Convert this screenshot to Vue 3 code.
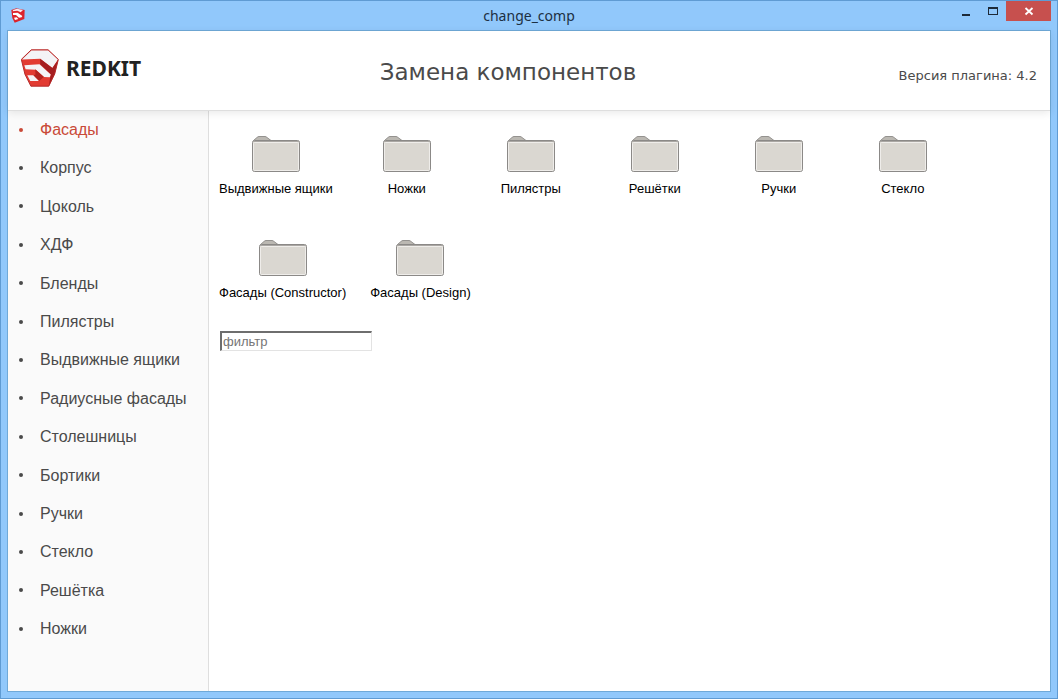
<script setup>
import { ref } from 'vue'

const categories = [
  'Фасады', 'Корпус', 'Цоколь', 'ХДФ', 'Бленды', 'Пилястры', 'Выдвижные ящики',
  'Радиусные фасады', 'Столешницы', 'Бортики', 'Ручки', 'Стекло', 'Решётка', 'Ножки',
]
const folders = [
  'Выдвижные ящики', 'Ножки', 'Пилястры', 'Решётки', 'Ручки', 'Стекло',
  'Фасады (Constructor)', 'Фасады (Design)',
]
const active = ref('Фасады')
const filter = ref('')
</script>

<template>
  <div class="window">
    <div class="titlebar">
      <svg class="app-icon" viewBox="34 22 42 45" aria-hidden="true">
        <path d="M35 28l15-5 25 5-1 27-29 11-7-14z" fill="#dc242c" />
        <path d="M40 28l12-4 18 4-7 7-10-5-14 2z" fill="#fbe9ee" />
        <path d="M40 37l14-1 14 10-2 4-8 1-9-8-9 0z" fill="#fff" />
        <path d="M43 51l8-1 5 5-10 3z" fill="#fff" />
      </svg>
      <span class="caption">change_comp</span>
      <div class="controls">
        <button class="min" type="button" aria-label="Свернуть">
          <svg viewBox="0 0 10 10"><path d="M1 8h8v2H1z" fill="#1d2a38" /></svg>
        </button>
        <button class="max" type="button" aria-label="Развернуть">
          <svg viewBox="0 0 10 10"><path d="M0 1h10v8H0zM1 3v5h8V3z" fill="#1d2a38" fill-rule="evenodd" /></svg>
        </button>
        <button class="close" type="button" aria-label="Закрыть">
          <svg viewBox="0 0 10 10"><path d="M1.500 2l7 6.500M8.500 2l-7 6.500" stroke="#fff" stroke-width="1.800" /></svg>
        </button>
      </div>
    </div>
    <div class="client">
      <header class="header">
        <div class="brand">
          <svg class="logo" viewBox="64 146 115 114" aria-hidden="true">
            <path d="M95 148h51l31 29-11 44-18 37H94l-18-36-11-45z" fill="#e23b32" />
            <path d="M96 149h50l30 28-17 26-37-28-55 2z" fill="#f4f3f6" />
            <path d="M122 175l37 28 18-26-11 44-18 37 6-35-32-31z" fill="#a51e20" />
            <path d="M74 195l46-3 34 31-3 8-17-1-25-22-31-1z" fill="#f4f3f6" />
            <path d="M107 207l26 23-14 12-18-17 7-2z" fill="#b3231f" />
            <path d="M83 225l18 0 17 17H92z" fill="#f4f3f6" />
            <path d="M95 148h51l31 29-11 44-18 37H94l-18-36-11-45z" fill="none" stroke="#b52b2b" stroke-width="3" />
          </svg>
          <span class="brand-name">REDKIT</span>
        </div>
        <h1>Замена компонентов</h1>
        <div class="version">Версия плагина: 4.2</div>
      </header>
      <div class="body">
        <nav class="sidebar">
          <ul>
            <li v-for="c in categories" :key="c" :class="{ active: c === active }">
              <a href="#" @click.prevent="active = c">{{ c }}</a>
            </li>
          </ul>
        </nav>
        <main class="content">
          <div class="folders">
            <button v-for="f in folders" :key="f" class="folder" type="button">
              <svg viewBox="0 0 48 36" aria-hidden="true">
                <path d="M1.500 9V4.500L5 1.500Q6 .5 7 .5h6q1 0 2 1l4 3V9z" fill="#bbb8b2" stroke="#94928f" />
                <rect x=".5" y="4.500" width="47" height="31" rx="2" fill="#dad7d1" stroke="#8b8987" />
                <path d="M1 5.500h46" stroke="#aaa7a3" />
                <rect x="1.500" y="6.500" width="45" height="28" rx="1" fill="none" stroke="#efedea" />
              </svg>
              <span>{{ f }}</span>
            </button>
          </div>
          <input v-model="filter" class="filter" type="text" placeholder="фильтр" aria-label="фильтр">
        </main>
      </div>
    </div>
  </div>
</template>

<style>
body { margin: 0; }
</style>

<style scoped>
* { box-sizing: border-box; }
.window {
  min-height: 100vh;
  display: flex;
  flex-direction: column;
  padding: 0 6px 6px;
  border: 1px solid #5f9bd3;
  background: #91c8fb;
  font-family: "Liberation Sans", Arial, sans-serif;
}
.titlebar {
  display: grid;
  grid-template-columns: 1fr auto 1fr;
  height: 29px;
}
.app-icon { width: 14px; height: 15px; margin: 7px 0 0 4px; }
.caption {
  font-family: "Noto Sans", "Open Sans", sans-serif;
  font-size: 14px;
  line-height: 30px;
  color: #1c2f42;
}
.controls { display: flex; justify-content: flex-end; align-items: flex-start; }
.controls button {
  width: 27px;
  height: 20px;
  padding: 0;
  border: 0;
  background: none;
  display: flex;
  align-items: center;
  justify-content: center;
}
.controls svg { width: 10px; height: 10px; }
.controls .close { width: 45px; background: #c7504e; }
.client {
  flex: 1;
  display: flex;
  flex-direction: column;
  border: 1px solid #6fa9d8;
  background: #fff;
}
.header {
  position: relative;
  display: grid;
  grid-template-columns: 1fr auto 1fr;
  align-items: center;
  height: 80px;
  padding: 0 13px;
  border-bottom: 1px solid #dedede;
  box-shadow: 0 2px 8px rgba(0, 0, 0, 0.09);
  color: #4a4a4a;
  font-family: "DejaVu Sans", Verdana, sans-serif;
}
.brand { display: flex; align-items: center; gap: 7px; padding-bottom: 5px; }
.logo { width: 38px; height: 38px; }
.brand-name { font: bold 21px/30px "Noto Sans", "Open Sans", sans-serif; color: #222; }
h1 {
  margin: 0;
  padding: 2px 42px 0 0;
  font-size: 23px;
  line-height: 30px;
  font-weight: normal;
}
.version { padding-top: 10px; text-align: right; font-size: 13px; line-height: 18px; }
.body { flex: 1; display: flex; }
.sidebar {
  width: 201px;
  flex: none;
  border-right: 1px solid #dedede;
  background: #fafafa;
}
.sidebar ul { margin: 0; padding: 0; list-style: none; font-size: 16px; line-height: 1.15; }
.sidebar li { display: flex; align-items: center; padding: 10px; color: #4a4a4a; }
.sidebar li::before {
  content: "";
  width: 4px;
  height: 4px;
  margin: 0 17px 1px 1px;
  border-radius: 50%;
  background: currentColor;
}
.sidebar li.active { color: #c94a38; }
.sidebar a { color: inherit; text-decoration: none; }
.content { flex: 1; min-width: 0; padding: 25px 8px; }
.folders { display: flex; flex-wrap: wrap; gap: 42px 20px; }
.folder {
  min-width: 104px;
  padding: 0 2px;
  border: 0;
  background: none;
  display: flex;
  flex-direction: column;
  align-items: center;
  gap: 8px;
  font: 13px/18px "Liberation Sans", Arial, sans-serif;
  color: #000;
}
.folder svg { width: 48px; height: 36px; }
.filter {
  display: block;
  width: 152px;
  height: 20px;
  margin: 29px 0 0 3px;
  padding: 1px;
  border: solid;
  border-color: #6e6e6e #e3e3e3 #e3e3e3 #6e6e6e;
  border-width: 2px 1px 1px 2px;
  background: #fff;
  font: 13px/15px "Liberation Sans", Arial, sans-serif;
}
.filter::placeholder { color: #757575; opacity: 1; }
</style>
